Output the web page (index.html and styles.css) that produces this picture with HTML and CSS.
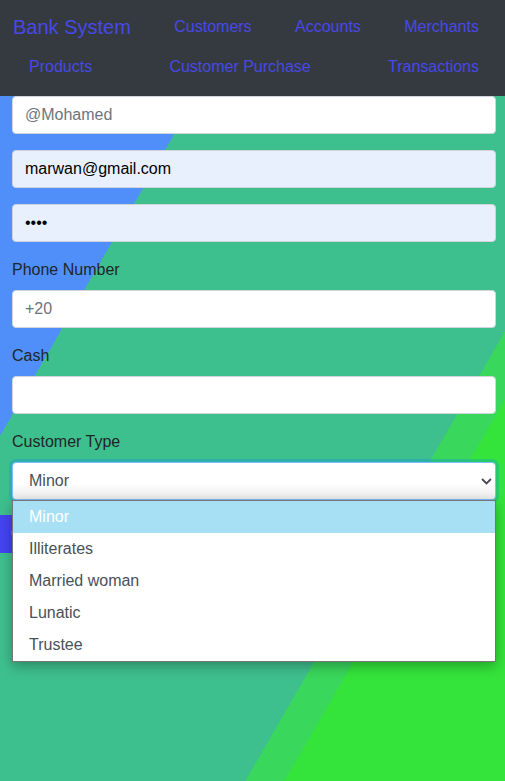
FILE: index.html
```html
<!DOCTYPE html>
<html lang="en">
<head>
<meta charset="utf-8">
<title>Bank System</title>
<link rel="stylesheet" href="styles.css">
</head>
<body>
<div class="page">
  <nav class="navbar">
    <div class="nav-row row-one">
      <a class="brand" href="#">Bank System</a>
      <a class="nav-link" href="#">Customers</a>
      <a class="nav-link" href="#">Accounts</a>
      <a class="nav-link" href="#">Merchants</a>
    </div>
    <div class="nav-row row-two">
      <a class="nav-link" href="#">Products</a>
      <a class="nav-link" href="#">Customer Purchase</a>
      <a class="nav-link" href="#">Transactions</a>
    </div>
  </nav>

  <form class="form">
    <div class="group">
      <input class="control" type="text" placeholder="@Mohamed">
    </div>
    <div class="group">
      <input class="control autofill" type="email" value="marwan@gmail.com">
    </div>
    <div class="group">
      <input class="control autofill" type="password" value="1234">
    </div>
    <div class="group">
      <label class="label">Phone Number</label>
      <input class="control" type="text" placeholder="+20">
    </div>
    <div class="group">
      <label class="label">Cash</label>
      <input class="control" type="text">
    </div>
    <div class="group select-group">
      <label class="label">Customer Type</label>
      <div class="select-wrap">
        <div class="select">
          <span>Minor</span>
          <svg class="chevron" width="11" height="7" viewBox="0 0 11 7"><path d="M1 1 L5.5 5.5 L10 1" fill="none" stroke="#45494e" stroke-width="1.8"/></svg>
        </div>
        <ul class="dropdown">
          <li class="option active">Minor</li>
          <li class="option">Illiterates</li>
          <li class="option">Married woman</li>
          <li class="option">Lunatic</li>
          <li class="option">Trustee</li>
        </ul>
      </div>
    </div>
    <button class="btn" type="button">Create</button>
  </form>
</div>
</body>
</html>
```

FILE: styles.css
```css
html, body {
  margin: 0;
  padding: 0;
}
body {
  font-family: "Liberation Sans", Arial, sans-serif;
  font-size: 16px;
  color: #212529;
}
.page {
  min-height: 100vh;
  background: linear-gradient(120deg,
    #508ff9 0px, #508ff9 218px,
    #3ec08e 218px, #3ec08e 603px,
    #39d75b 603px, #39d75b 637px,
    #34e43a 637px, #34e43a 100%);
}
.navbar {
  background: #343a40;
  padding: 7px 0 9px;
  box-sizing: border-box;
  height: 96px;
}
.nav-row {
  display: flex;
  justify-content: space-between;
  align-items: flex-start;
  height: 40px;
  line-height: 40px;
  padding-right: 26px;
}
.row-one { padding-left: 13px; }
.row-two { padding-left: 29px; }
.brand {
  font-size: 20px;
  color: #4848e8;
  text-decoration: none;
}
.nav-link {
  font-size: 16px;
  color: #4848e8;
  text-decoration: none;
}
.form {
  padding: 0 9px 0 12px;
}
.group {
  margin-bottom: 16px;
}
.label {
  display: block;
  line-height: 24px;
  margin-bottom: 8px;
}
.control {
  display: block;
  width: 100%;
  box-sizing: border-box;
  height: 38px;
  padding: 6px 12px;
  font-family: "Liberation Sans", Arial, sans-serif;
  font-size: 16px;
  line-height: 24px;
  color: #495057;
  background: #fff;
  border: 1px solid #ced4da;
  border-radius: 4px;
  outline: none;
}
.control::placeholder {
  color: #6c757d;
}
.autofill {
  background: #e8f0fe;
  color: #000;
}
.select-wrap {
  position: relative;
}
.select {
  display: flex;
  align-items: center;
  justify-content: space-between;
  box-sizing: border-box;
  height: 38px;
  padding: 0 3px 0 16px;
  color: #495057;
  background: linear-gradient(#ffffff 0%, #ffffff 55%, #ececec 100%);
  border: 1px solid #80bdff;
  border-radius: 4px;
  box-shadow: 0 0 0 3px rgba(0, 123, 255, 0.25);
}
.chevron {
  display: block;
}
.dropdown {
  position: absolute;
  left: 0;
  right: 0;
  top: 100%;
  margin: 0;
  padding: 0;
  list-style: none;
  background: #fff;
  border: 1px solid #767676;
  box-shadow: 0 4px 12px rgba(0, 0, 0, 0.3);
  z-index: 5;
}
.option {
  height: 32px;
  line-height: 32px;
  padding-left: 16px;
  color: #495057;
}
.option.active {
  background: #a7dff4;
  color: #fff;
}
.select-group {
  margin-bottom: 15px;
}
.btn {
  display: block;
  margin-left: -12px;
  height: 38px;
  padding: 6px 12px 6px 11px;
  font-family: "Liberation Sans", Arial, sans-serif;
  font-size: 16px;
  color: #fff;
  background: #4444f3;
  border: none;
  border-radius: 0;
}
```
